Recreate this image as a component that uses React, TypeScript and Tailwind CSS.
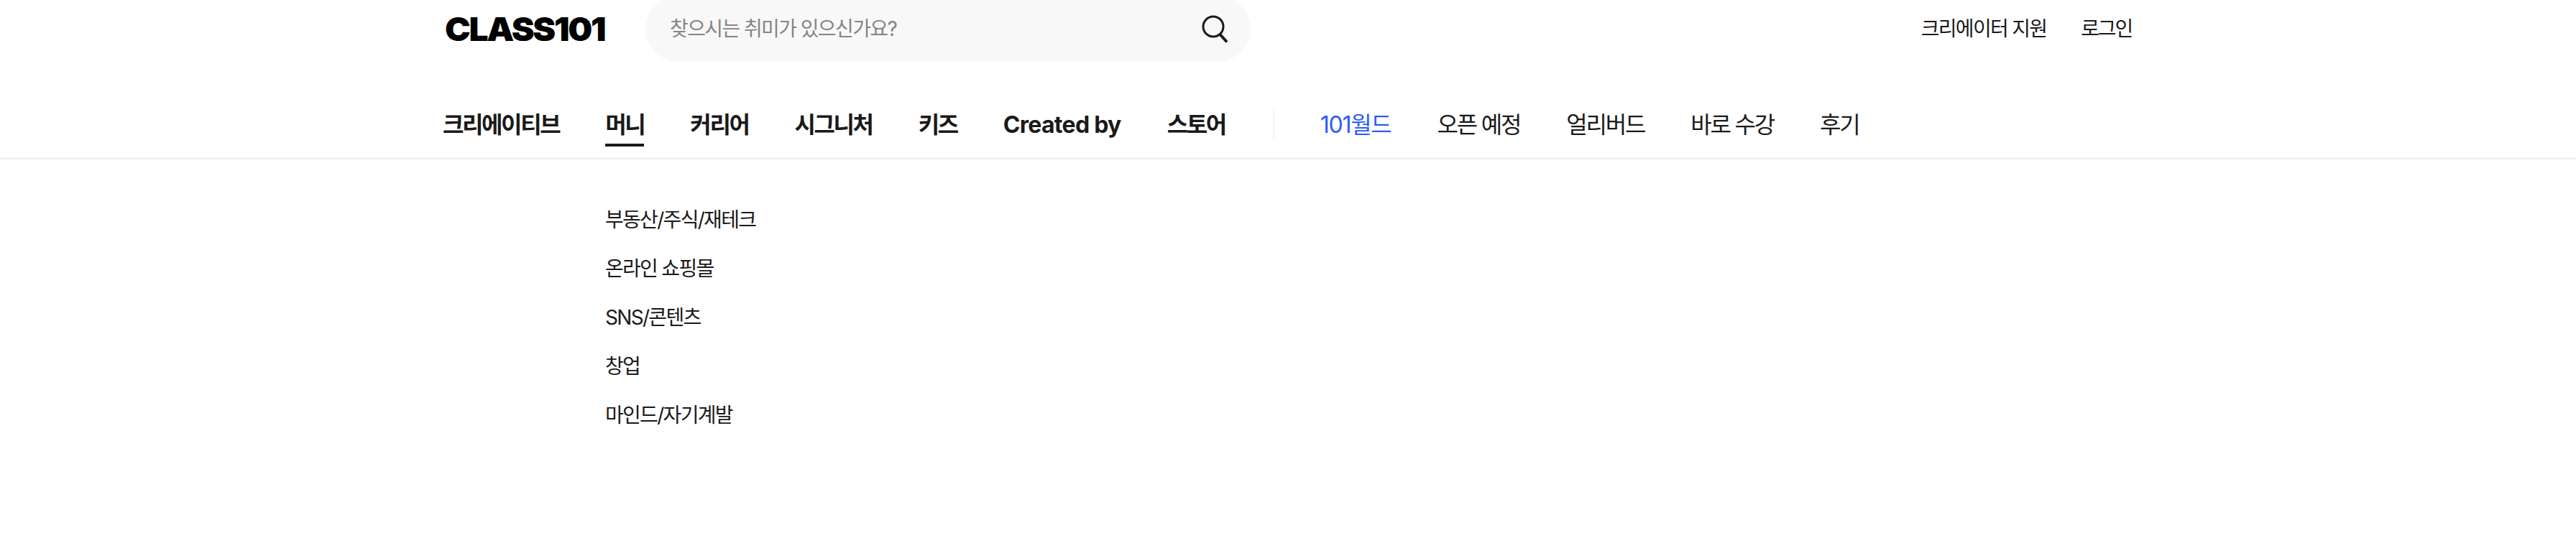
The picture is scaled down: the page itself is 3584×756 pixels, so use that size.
import React from "react";

const main = ["크리에이티브", "머니", "커리어", "시그니처", "키즈", "Created by", "스토어"];
const secondary = ["오픈 예정", "얼리버드", "바로 수강", "후기"];
const subs = ["부동산/주식/재테크", "온라인 쇼핑몰", "SNS/콘텐츠", "창업", "마인드/자기계발"];

export default function App() {
  return (
    <div className="h-[756px] overflow-hidden bg-white text-[#1a1a1a] font-['Inter','Noto_Sans_CJK_KR',sans-serif]">
      <header className="ml-[616px] w-[2350px] -mt-[6px] flex items-center justify-between h-[92px]">
        <div className="flex items-center">
          <span className="w-[282px] text-[46px] leading-none font-black tracking-[-2.2px] text-black pl-[3px] origin-left scale-x-[1.04]">CLASS101</span>
          <div className="w-[842px] h-[92px] rounded-[46px] bg-[#f8f8f8] pl-[34px] pr-[29px] flex items-center justify-between">
            <span className="text-[28px] tracking-[-1.6px] text-[#858585]">찾으시는 취미가 있으신가요?</span>
            <svg width="40" height="40" viewBox="0 0 40 40" fill="none" stroke="#1a1a1a">
              <circle cx="17" cy="17" r="14" strokeWidth="3" />
              <path d="M26.5 28 L36 38.5" strokeWidth="4" />
            </svg>
          </div>
        </div>
        <div className="flex items-center gap-[48px] text-[28px] tracking-[-1.7px]">
          <span>크리에이터 지원</span>
          <span className="tracking-[-2.2px]">로그인</span>
        </div>
      </header>

      <nav className="mt-[52px] h-[84px] pl-[616px] border-b-2 border-[#eeeeee] flex items-start">
        <ul className="flex gap-[64px] text-[32px] font-bold tracking-[-2.4px] leading-[72px] h-[82px]">
          {main.map((m, i) => (
            <li
              key={m}
              className={i === 1 ? "h-[66px] border-b-4 border-[#1a1a1a]" : m === "Created by" ? "h-[66px] tracking-[-0.7px]" : "h-[66px]"}
            >
              {m}
            </li>
          ))}
        </ul>
        <div className="w-[2px] h-[44px] bg-[#f4f4f4] mt-[14px] ml-[66px] mr-[64px]" />
        <ul className="flex gap-[64px] text-[32px] tracking-[-2.2px] leading-[72px]">
          <li className="text-[#2b5cf5] tracking-[-1.3px]">101월드</li>
          {secondary.map((s) => (
            <li key={s}>{s}</li>
          ))}
        </ul>
      </nav>

      <ul className="ml-[842px] mt-[64px] flex flex-col gap-[28px] text-[28px] leading-[40px] tracking-[-1.7px]">
        {subs.map((s) => (
          <li key={s}>{s}</li>
        ))}
      </ul>
    </div>
  );
}
